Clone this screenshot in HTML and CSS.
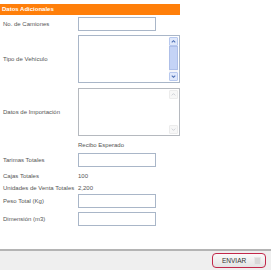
FILE: index.html
```html
<!DOCTYPE html>
<html lang="es">
<head>
    <meta charset="UTF-8">
    <title>Datos Adicionales</title>
    <link rel="stylesheet" href="styles.css">
</head>
<body>
    <div class="page">
        <div class="panel">
            <div class="panel-title">Datos Adicionales</div>

            <div class="row row-input first">
                <span class="label">No. de Camiones</span>
                <div class="field"></div>
            </div>

            <div class="row row-area">
                <span class="label">Tipo de Vehículo</span>
                <div class="area">
                    <div class="area-text"></div>
                    <div class="scroll">
                        <div class="sbtn"><svg viewBox="0 0 8 8"><path d="M2 5 L4 3 L6 5" fill="none" stroke="#4d6fb5" stroke-width="1.2"/></svg></div>
                        <div class="thumb"></div>
                        <div class="track"></div>
                        <div class="sbtn"><svg viewBox="0 0 8 8"><path d="M2 3 L4 5 L6 3" fill="none" stroke="#4d6fb5" stroke-width="1.2"/></svg></div>
                    </div>
                </div>
            </div>

            <div class="row row-area second">
                <span class="label">Datos de Importación</span>
                <div class="area off">
                    <div class="area-text"></div>
                    <div class="scroll">
                        <div class="sbtn"><svg viewBox="0 0 8 8"><path d="M2 5 L4 3 L6 5" fill="none" stroke="#c8ccd2" stroke-width="1"/></svg></div>
                        <div class="track"></div>
                        <div class="sbtn"><svg viewBox="0 0 8 8"><path d="M2 3 L4 5 L6 3" fill="none" stroke="#c8ccd2" stroke-width="1"/></svg></div>
                    </div>
                </div>
            </div>

            <div class="row row-text recibo">
                <span class="label"></span>
                <span class="value">Recibo Esperado</span>
            </div>

            <div class="row row-input tarimas">
                <span class="label">Tarimas Totales</span>
                <div class="field"></div>
            </div>

            <div class="row row-text cajas">
                <span class="label">Cajas Totales</span>
                <span class="value">100</span>
            </div>

            <div class="row row-text unidades">
                <span class="label">Unidades de Venta Totales</span>
                <span class="value">2,200</span>
            </div>

            <div class="row row-input peso">
                <span class="label">Peso Total (Kg)</span>
                <div class="field"></div>
            </div>

            <div class="row row-input dimension">
                <span class="label">Dimensión (m3)</span>
                <div class="field"></div>
            </div>
        </div>

        <div class="footer">
            <button class="send">ENVIAR <span class="send-icon"></span></button>
        </div>
    </div>
</body>
</html>
```

FILE: styles.css
```css
body {
    margin: 0;
    background: white;
    font-family: "Liberation Sans", Arial, sans-serif;
    font-size: 6px;
    color: #555;
}
.page {
    width: 271px;
    height: 270px;
    display: flex;
    flex-direction: column;
}
.panel {
    width: 180px;
    padding-top: 4px;
    display: flex;
    flex-direction: column;
}
.panel-title {
    height: 11px;
    line-height: 11px;
    background: #ff7f0a;
    color: white;
    font-weight: bold;
    padding-left: 2px;
    font-size: 6px;
}
.row {
    display: flex;
    align-items: center;
}
.label {
    width: 75px;
    padding-left: 3px;
    flex-shrink: 0;
    white-space: nowrap;
}
.row-input {
    height: 14px;
}
.field {
    width: 76px;
    height: 12px;
    border: 1px solid #a9b6c8;
    background: white;
}
.row-text {
    height: 11px;
}
.first { margin-top: 2px; }
.row-area { margin-top: 4px; }
.row-area.second { margin-top: 5px; }
.recibo { margin-top: 3px; }
.tarimas { margin-top: 3px; }
.cajas { margin-top: 3px; }
.unidades { margin-top: 1px; }
.peso { margin-top: 1px; }
.dimension { margin-top: 4px; }
.area {
    width: 100px;
    height: 46px;
    border: 1px solid #a9b6c8;
    display: flex;
    background: white;
}
.area.off {
    border-color: #b5b9bf;
}
.area-text {
    flex: 1;
}
.scroll {
    width: 9px;
    padding: 1px 1px 1px 0;
    display: flex;
    flex-direction: column;
}
.sbtn {
    height: 9px;
    background: #dfe8fb;
    border: 1px solid #b7c8ee;
    box-sizing: border-box;
    border-radius: 1px;
}
.sbtn svg {
    width: 100%;
    height: 100%;
    display: block;
}
.thumb {
    height: 24px;
    background: #c4d3f6;
    border: 1px solid #aebfe8;
    box-sizing: border-box;
}
.track {
    flex: 1;
    background: #f4f5f8;
}
.off .sbtn {
    background: #f7f7f7;
    border-color: #ececec;
}
.off .track {
    background: white;
}
.footer {
    margin-top: auto;
    height: 19px;
    border-top: 2px solid #b4b4b4;
    background: #efefef;
    display: flex;
    align-items: center;
    justify-content: flex-end;
    padding-right: 5px;
}
.send {
    width: 54px;
    height: 15px;
    border: 1px solid #c2284a;
    border-radius: 4px;
    background: linear-gradient(#fafafa, #e4e4e4);
    font-family: "Liberation Sans", Arial, sans-serif;
    font-size: 6.5px;
    color: #333;
    padding: 0 4px 0 9px;
    display: flex;
    align-items: center;
    justify-content: space-between;
}
.send-icon {
    width: 5px;
    height: 6px;
    background: #d8d8d8;
    border: 1px solid #e6e6e6;
}
```
